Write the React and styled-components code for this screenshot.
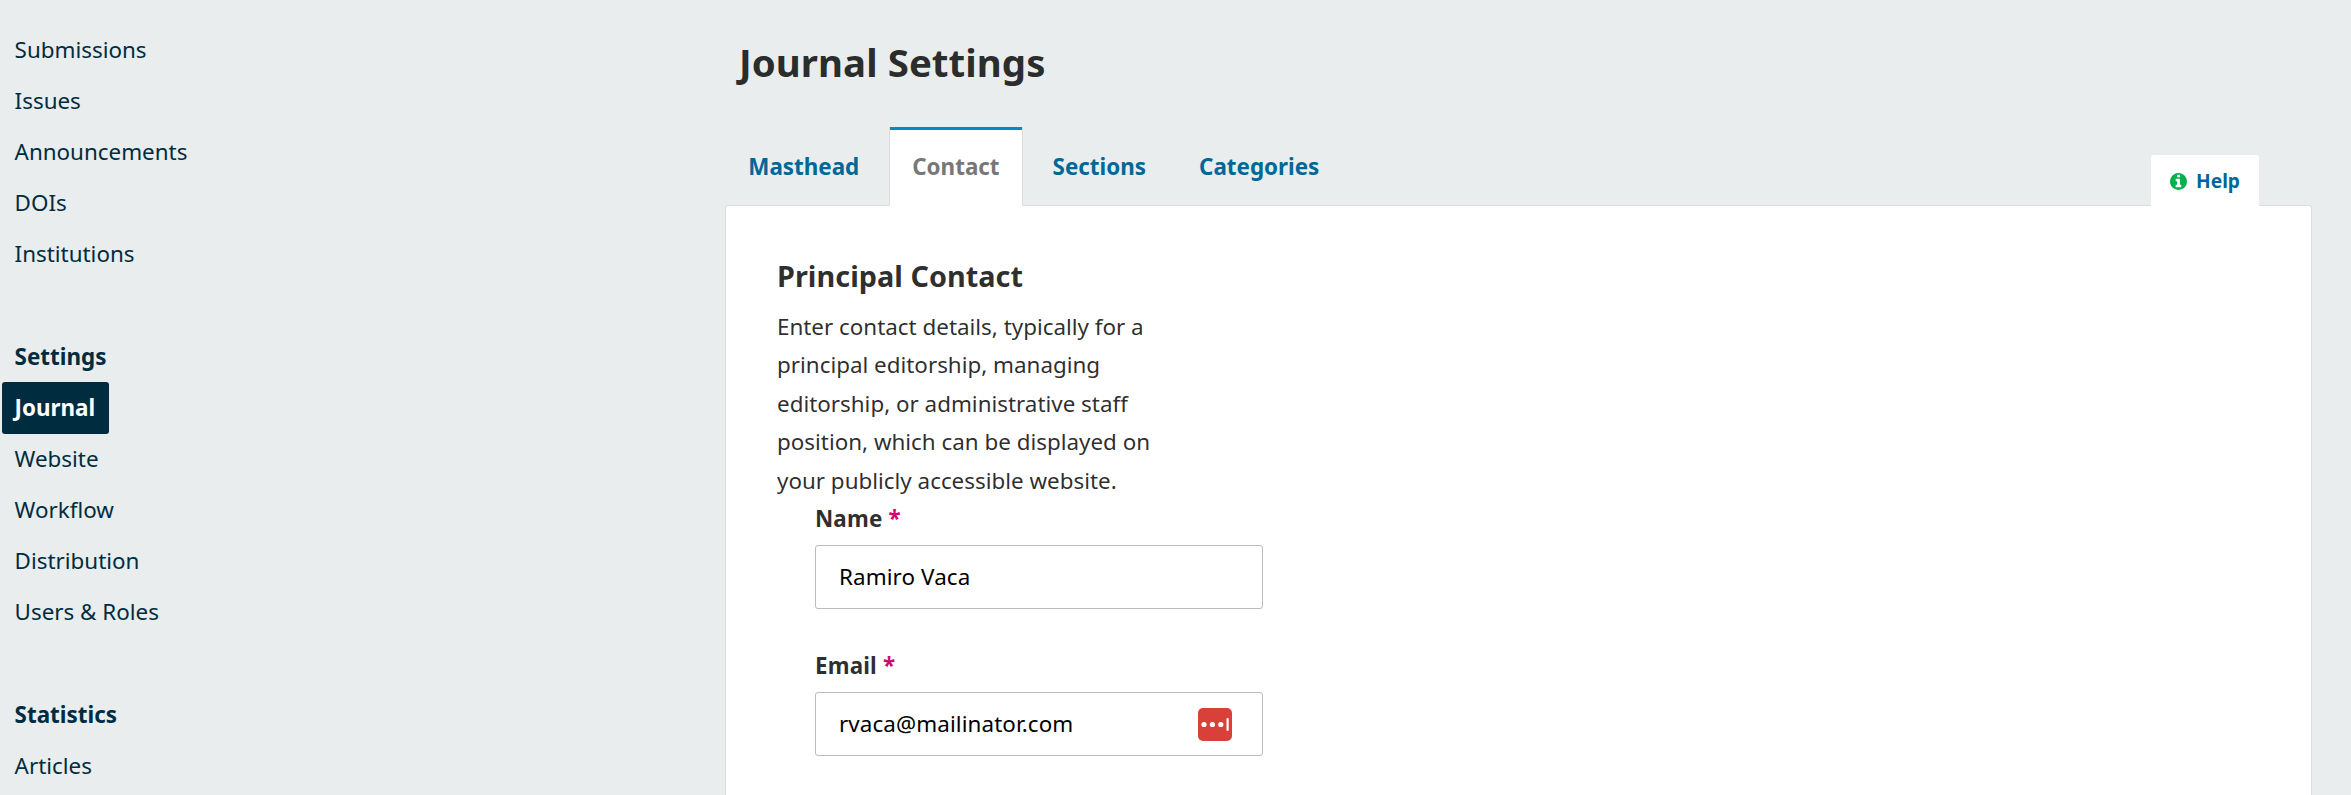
import React from "react";
import styled, { createGlobalStyle } from "styled-components";

const GlobalStyle = createGlobalStyle`
  * { box-sizing: border-box; }
  body {
    margin: 0;
    background: #e9eded;
    font-family: "Noto Sans", "Open Sans", sans-serif;
    font-size: 22.4px;
    line-height: 38.4px;
    color: rgba(0, 0, 0, 0.84);
  }
`;

const Page = styled.div`
  display: flex;
  height: 795px;
  overflow: hidden;
`;

const Sidebar = styled.nav`
  flex: none;
  width: 725px;
  padding: 24px 0 0 2px;
`;

const NavGroup = styled.ul`
  list-style: none;
  margin: 0 0 51.4px;
  padding: 0;
`;

const NavRow = styled.li`
  display: flex;
  height: 51.1px;
`;

const NavLink = styled.a`
  display: block;
  height: 52px;
  padding: 0 13.5px 0 12.6px;
  line-height: 52px;
  border-radius: 3px;
  color: ${(p) => (p.$active ? "#fff" : "#002c40")};
  background: ${(p) => (p.$active ? "#002c40" : "transparent")};
  font-weight: ${(p) => (p.$active ? 700 : 400)};
`;

const NavHeading = styled.span`
  padding: 0 12.6px;
  line-height: 52px;
  font-weight: 700;
  color: #002c40;
`;

const Main = styled.main`
  flex: none;
  width: 1587px;
  display: flex;
  flex-direction: column;
`;

const Title = styled.h1`
  margin: 0;
  padding: 37px 0 0 14px;
  height: 127px;
  font-size: 38.4px;
  line-height: 51px;
  font-weight: 700;
  letter-spacing: 0.06px;
`;

const TabBar = styled.div`
  display: flex;
  align-items: flex-end;
  height: 79px;
  padding-right: 53px;
  margin-bottom: -1px;
  z-index: 1;
`;

const Tab = styled.button`
  height: 79px;
  margin: 0 6.2px 0 0;
  padding: 2px 22.5px 0 22.3px;
  border: 0 solid #ddd;
  border-width: 0 1px;
  border-color: ${(p) => (p.$active ? "#ddd" : "transparent")};
  box-shadow: ${(p) => (p.$active ? "inset 0 3px 0 #008acb" : "none")};
  background: ${(p) => (p.$active ? "#fff" : "transparent")};
  color: ${(p) => (p.$active ? "#777" : "#006798")};
  font: inherit;
  font-weight: 700;
`;

const HelpTab = styled.button`
  display: flex;
  align-items: center;
  gap: 9.5px;
  height: 51px;
  margin-left: auto;
  padding: 2px 19px 0 19px;
  border: 0;
  border-radius: 3px 3px 0 0;
  background: #fff;
  color: #006798;
  font: inherit;
  font-size: 19.2px;
  font-weight: 700;

  svg { color: #00b24e; }
`;

const Panel = styled.section`
  flex: 1;
  padding: 51px 0 0 51px;
  border: 1px solid #ddd;
  border-bottom: 0;
  border-radius: 3px 3px 0 0;
  background: #fff;
`;

const Legend = styled.h2`
  margin: 0 0 13px;
  font-size: 28.8px;
  line-height: 38px;
  font-weight: 700;
  letter-spacing: 0.04px;
`;

const Description = styled.p`
  width: 384px;
  margin: 0;
`;

const Fields = styled.div`
  width: 448px;
  margin-left: 38px;
`;

const Field = styled.div`
  height: 147px;
`;

const Label = styled.label`
  display: block;
  height: 38px;
  font-weight: 700;
  letter-spacing: 0.15px;
`;

const Required = styled.span`
  color: #d00a6c;
`;

const InputBox = styled.div`
  display: flex;
  align-items: center;
  justify-content: space-between;
  height: 64px;
  padding: 0 30px 0 23px;
  margin-top: 7px;
  border: 1px solid #bbb;
  border-radius: 3px;
  color: #000;
  letter-spacing: 0.1px;
`;

const general = ["Submissions", "Issues", "Announcements", "DOIs", "Institutions"];
const settings = ["Journal", "Website", "Workflow", "Distribution", "Users & Roles"];
const tabs = ["Masthead", "Contact", "Sections", "Categories"];

function NavSection({ heading, items, active }) {
  return (
    <NavGroup>
      {heading && (
        <NavRow>
          <NavHeading>{heading}</NavHeading>
        </NavRow>
      )}
      {items.map((item) => (
        <NavRow key={item}>
          <NavLink $active={item === active}>{item}</NavLink>
        </NavRow>
      ))}
    </NavGroup>
  );
}

function InfoIcon() {
  return (
    <svg width="17" height="17" viewBox="0 0 1536 1536" fill="currentColor">
      <path d="M1024 1248v-160q0-14-9-23t-23-9h-96v-512q0-14-9-23t-23-9h-320q-14 0-23 9t-9 23v160q0 14 9 23t23 9h96v320h-96q-14 0-23 9t-9 23v160q0 14 9 23t23 9h448q14 0 23-9t9-23zM896 352v-160q0-14-9-23t-23-9h-192q-14 0-23 9t-9 23v160q0 14 9 23t23 9h192q14 0 23-9t9-23zM1536 768q0 209-103 385.500t-279.500 279.500-385.500 103-385.500-103-279.500-279.500-103-385.500 103-385.500 279.500-279.500 385.500-103 385.500 103 279.500 279.500 103 385.500z" />
    </svg>
  );
}

function PasswordManagerIcon() {
  return (
    <svg width="34" height="33" viewBox="0 0 34 33">
      <rect width="34" height="33" rx="5" fill="#d9403a" />
      <circle cx="6" cy="16.5" r="2.6" fill="#fff" />
      <circle cx="14.4" cy="16.5" r="2.6" fill="#fff" />
      <circle cx="22.8" cy="16.5" r="2.6" fill="#fff" />
      <rect x="28.5" y="10" width="2.2" height="13" rx="1" fill="#fff" />
    </svg>
  );
}

function TextField({ label, value, children }) {
  return (
    <Field>
      <Label>
        {label} <Required>*</Required>
      </Label>
      <InputBox>
        <span>{value}</span>
        {children}
      </InputBox>
    </Field>
  );
}

export default function App() {
  return (
    <Page>
      <GlobalStyle />
      <Sidebar>
        <NavSection items={general} />
        <NavSection heading="Settings" items={settings} active="Journal" />
        <NavSection heading="Statistics" items={["Articles"]} />
      </Sidebar>
      <Main>
        <Title>Journal Settings</Title>
        <TabBar>
          {tabs.map((tab) => (
            <Tab key={tab} $active={tab === "Contact"}>
              {tab}
            </Tab>
          ))}
          <HelpTab>
            <InfoIcon />
            Help
          </HelpTab>
        </TabBar>
        <Panel>
          <Legend>Principal Contact</Legend>
          <Description>
            Enter contact details, typically for a principal editorship, managing editorship, or
            administrative staff position, which can be displayed on your publicly accessible website.
          </Description>
          <Fields>
            <TextField label="Name" value="Ramiro Vaca" />
            <TextField label="Email" value="rvaca@mailinator.com">
              <PasswordManagerIcon />
            </TextField>
          </Fields>
        </Panel>
      </Main>
    </Page>
  );
}
